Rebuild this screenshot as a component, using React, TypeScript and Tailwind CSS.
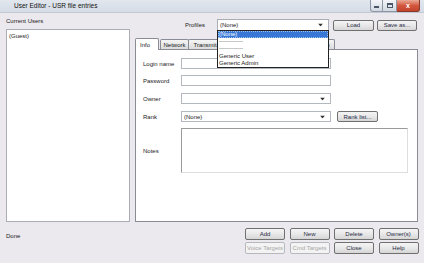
import React from 'react';

const Arrow = () => (
    <svg width="5" height="3" viewBox="0 0 5 3" className="absolute right-[5px] top-1/2 -translate-y-1/2">
        <path d="M0 0H5L2.5 3Z" fill="#333" />
    </svg>
);

const Btn: React.FC<{ label: string; w?: string; disabled?: boolean }> = ({ label, w = 'w-[40px]', disabled }) => (
    <div
        className={`${w} h-full flex items-center justify-center rounded-[2px] border text-[6px] leading-[8px] ${
            disabled
                ? 'border-[#b5b9bd] bg-[#f3f3f3] text-[#a6a6a6]'
                : 'border-[#707070] bg-gradient-to-b from-[#f4f4f4] via-[#e8e8e8] to-[#d6d6d6] text-[#1f2a44]'
        }`}
    >
        {label}
    </div>
);

const TextBox: React.FC<{ combo?: boolean; text?: string }> = ({ combo, text }) => (
    <div className="relative w-[150px] h-full bg-white border border-[#b3b7c0] flex items-center pl-[2px]">
        {text}
        {combo && <Arrow />}
    </div>
);

const TABS = [
    { label: 'Network', w: 'w-[29px]' },
    { label: 'Transmit', w: 'w-[34px]' },
    { label: 'Receive', w: 'w-[32px]' },
    { label: 'Storage', w: 'w-[32px]' },
    { label: 'Rights', w: 'w-[30px]' },
    { label: 'Auth', w: 'w-[23px]' },
];

const PROFILE_ITEMS = ['(None)', '------------', '------------', 'Generic User', 'Generic Admin'];

export default function App() {
    return (
        <div className="w-[424px] h-[263px] overflow-hidden bg-[#ebe9ee] flex flex-col text-[6px] leading-[8px] text-[#1a1a1a] font-['Liberation_Sans',Arial,sans-serif]">
            {/* title bar */}
            <div className="h-[13px] shrink-0 flex items-start bg-gradient-to-b from-[#e2e7ee] to-[#d5dce6] border-b border-[#c3c9d2]">
                <span className="pl-[14px] pt-[1.5px] text-[6.5px] text-[#111]">User Editor - USR file entries</span>
                <div className="ml-auto mr-[4px] flex h-[12px]">
                    <div className="w-[13px] h-full border border-[#8d96a5] border-t-0 rounded-bl-[3px] bg-gradient-to-b from-[#f3f5f8] to-[#d3d9e2] flex items-end justify-center pb-[3px]">
                        <div className="w-[5px] h-[2px] bg-[#4a5566]" />
                    </div>
                    <div className="w-[14px] h-full border border-l-0 border-[#8d96a5] border-t-0 bg-gradient-to-b from-[#f3f5f8] to-[#d3d9e2] flex items-center justify-center">
                        <div className="w-[6px] h-[5px] border border-[#4a5566] border-t-2" />
                    </div>
                    <div className="w-[23px] h-full border border-l-0 border-[#8a3a2c] border-t-0 rounded-br-[3px] bg-gradient-to-b from-[#e9a896] via-[#d2583f] to-[#c3412b] flex items-center justify-center text-white text-[7px] font-bold leading-none">
                        x
                    </div>
                </div>
            </div>

            {/* main area */}
            <div className="flex px-[6px] h-[209px] shrink-0">
                <div className="w-[124px] flex flex-col">
                    <div className="mt-[4px] h-[8px]">Current Users</div>
                    <div className="mt-[4px] flex-1 bg-white border border-[#a9adb5] pl-[2px] pt-[2px]">(Guest)</div>
                </div>

                <div className="ml-[5px] w-[283px] flex flex-col">
                    <div className="mt-[6px] h-[12px] flex items-center">
                        <span className="ml-[50px] w-[32px]">Profiles</span>
                        <div className="relative w-[112px] h-full bg-white border border-[#a9adb5] flex items-center pl-[2px]">
                            (None)
                            <Arrow />
                            <div className="absolute left-[-1px] top-full w-[112px] z-20 bg-white border border-[#222] flex flex-col">
                                {PROFILE_ITEMS.map((item, i) => (
                                    <div
                                        key={i}
                                        className={`h-[7.2px] leading-[7.2px] pl-[1px] ${
                                            i === 0 ? 'bg-[#3877d6] text-white outline-1 outline-dotted outline-[#9ec1ee] -outline-offset-1' : i < 3 ? 'text-[#555]' : ''
                                        }`}
                                    >
                                        {item}
                                    </div>
                                ))}
                            </div>
                        </div>
                        <div className="ml-[4px] h-[11px]"><Btn label="Load" w="w-[41px]" /></div>
                        <div className="ml-[3px] h-[11px]"><Btn label="Save as..." w="w-[40px]" /></div>
                    </div>

                    {/* tabs */}
                    <div className="mt-[6px] h-[12px] flex items-end">
                        <div className="relative z-10 w-[24px] h-[12px] -mb-px bg-white border border-b-0 border-[#898c95] rounded-t-[2px] pl-[4px] pt-[2px]">Info</div>
                        {TABS.map((t, i) => (
                            <div
                                key={t.label}
                                className={`${t.w} h-[10px] ${i === 0 ? 'ml-[1px]' : '-ml-px'} border border-b-0 border-[#898c95] rounded-t-[2px] bg-gradient-to-b from-[#f5f5f5] to-[#dcdcdc] flex items-center justify-center`}
                            >
                                {t.label}
                            </div>
                        ))}
                    </div>

                    {/* panel */}
                    <div className="h-[173px] bg-white border border-[#898c95] flex flex-col pl-[7px]">
                        <div className="mt-[8px] h-[11px] flex items-center">
                            <span className="w-[38px]">Login name</span>
                            <TextBox />
                        </div>
                        <div className="mt-[6px] h-[11px] flex items-center">
                            <span className="w-[38px]">Password</span>
                            <TextBox />
                        </div>
                        <div className="mt-[7px] h-[11px] flex items-center">
                            <span className="w-[38px]">Owner</span>
                            <TextBox combo />
                        </div>
                        <div className="mt-[7px] h-[11px] flex items-center">
                            <span className="w-[38px]">Rank</span>
                            <TextBox combo text="(None)" />
                            <div className="ml-[6px] h-[11px]"><Btn label="Rank list..." w="w-[41px]" /></div>
                        </div>
                        <div className="mt-[6px] h-[45px] flex items-center">
                            <span className="w-[38px]">Notes</span>
                            <div className="w-[227px] h-full bg-white border border-t-[#9a9a9a] border-l-[#9a9a9a] border-r-[#dedede] border-b-[#dedede]" />
                        </div>
                    </div>
                </div>
            </div>

            {/* bottom */}
            <div className="flex flex-1">
                <div className="pl-[6px] pt-[10px]">Done</div>
                <div className="ml-auto mr-[5.5px] pt-[6px] grid grid-cols-[40px_40px_40px_40px] grid-rows-[12px_12px] gap-x-[4.5px] gap-y-[2px]">
                    <Btn label="Add" />
                    <Btn label="New" />
                    <Btn label="Delete" />
                    <Btn label="Owner(s)" />
                    <Btn label="Voice Targets" disabled />
                    <Btn label="Cmd Targets" disabled />
                    <Btn label="Close" />
                    <Btn label="Help" />
                </div>
            </div>
        </div>
    );
}
